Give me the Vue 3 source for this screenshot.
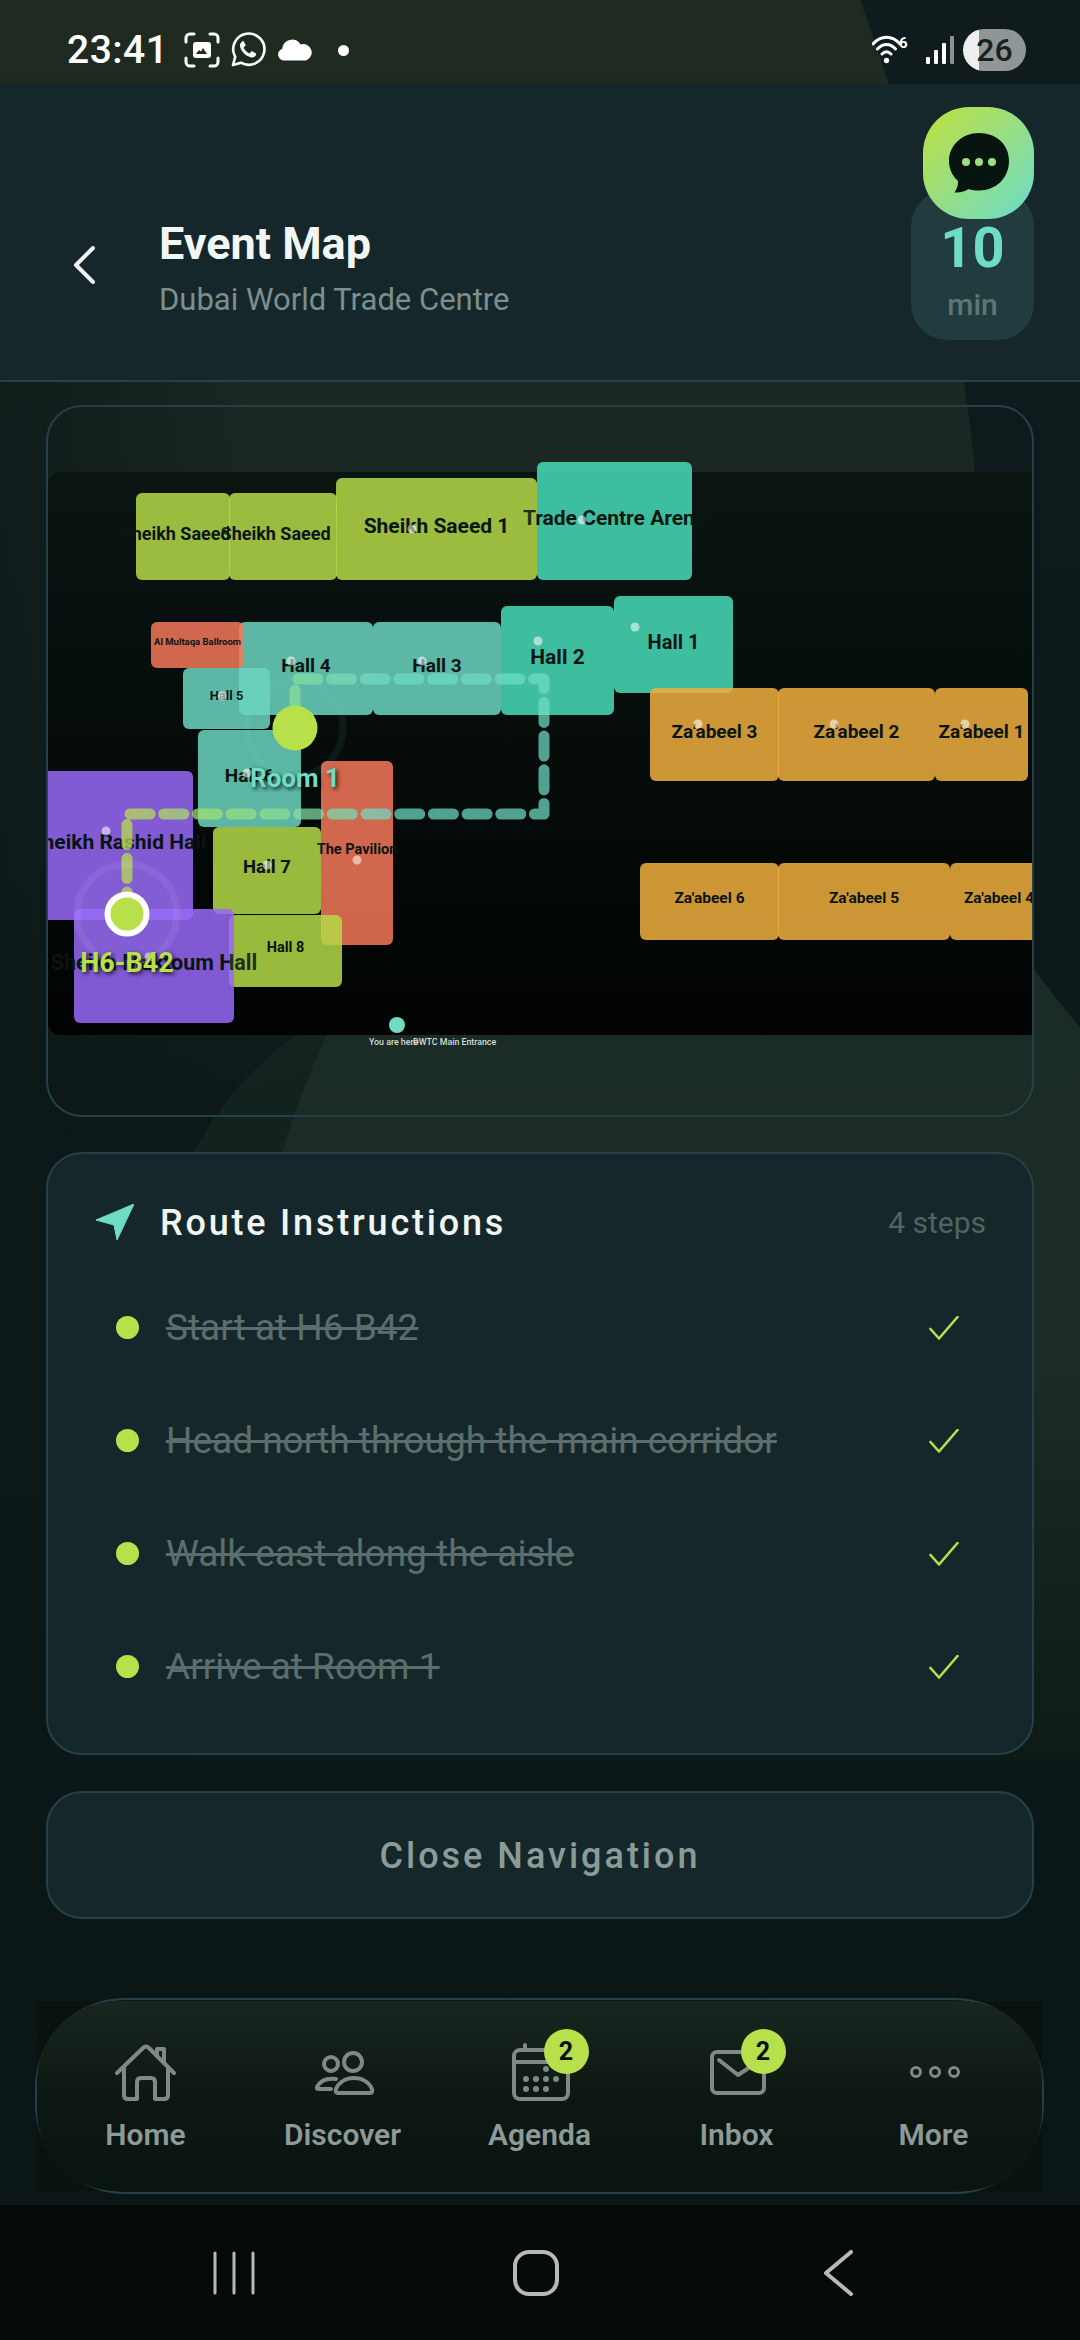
<template>
  <div class="page">
    <svg class="backdrop" viewBox="0 0 1080 2340" aria-hidden="true">
      <defs>
        <linearGradient id="blobTop" gradientUnits="userSpaceOnUse" x1="0" y1="0" x2="0" y2="1100">
          <stop offset="0" stop-color="#1f2b20" />
          <stop offset="0.45" stop-color="#1a2622" />
          <stop offset="1" stop-color="#0e1a1a" />
        </linearGradient>
        <linearGradient id="blobLow" gradientUnits="userSpaceOnUse" x1="0" y1="900" x2="0" y2="1760">
          <stop offset="0" stop-color="#1a2a25" />
          <stop offset="0.5" stop-color="#1d2d25" />
          <stop offset="1" stop-color="#0e1a18" />
        </linearGradient>
        <linearGradient id="edgeFade" gradientUnits="userSpaceOnUse" x1="0" y1="0" x2="260" y2="0">
          <stop offset="0" stop-color="#0c1818" stop-opacity="0.7" />
          <stop offset="1" stop-color="#0c1818" stop-opacity="0" />
        </linearGradient>
      </defs>
      <path d="M0 0H860C900 110 960 300 975 470L960 900L0 1150Z" fill="url(#blobTop)" />
      <rect x="0" y="382" width="260" height="780" fill="url(#edgeFade)" />
      <path d="M190 1160C220 1100 260 1060 297 1035C400 960 700 800 850 800C950 830 1020 960 1080 1027V1760H190Z" fill="url(#blobLow)" opacity="0.5" />
      <path d="M280 1160C295 1110 310 1070 327 1035C420 960 700 800 850 800C950 830 1020 960 1080 1027V1760H280Z" fill="url(#blobLow)" />
    </svg>

    <div class="status-bar">
      <span class="clock">23:41</span>
      <svg class="st-icon" width="36" height="36" viewBox="0 0 36 36">
        <path d="M2 10V6a4 4 0 0 1 4-4h4M26 2h4a4 4 0 0 1 4 4v4M34 26v4a4 4 0 0 1-4 4h-4M10 34H6a4 4 0 0 1-4-4v-4" fill="none" stroke="#fff" stroke-width="3" stroke-linecap="round" />
        <rect x="9" y="10" width="18" height="16" rx="3" fill="#fff" />
        <path d="M12 22l3-4 2 1.5 2-3.5 4 6z" fill="#1f2a20" />
      </svg>
      <svg class="st-icon wa" width="36" height="36" viewBox="0 0 36 36">
        <path d="M3 33l2.2-8.2A15.6 15.6 0 1 1 11 30.7z" fill="none" stroke="#fff" stroke-width="2.6" stroke-linejoin="round" />
        <path d="M12.5 9.5c-2 1-3 3-2.3 5.4 1.4 4.8 5.5 8.8 10.4 10.3 2.4.7 4.4-.3 5.4-2.3.3-.7.2-1.2-.4-1.6l-3-1.8c-.6-.3-1.1-.2-1.5.3l-1 1.2c-.3.4-.7.4-1.1.2-2.3-1.1-4.1-2.9-5.2-5.2-.2-.4-.1-.8.2-1.1l1.1-1c.5-.4.6-.9.3-1.5l-1.7-3c-.4-.6-.9-.7-1.5-.4z" fill="#fff" />
      </svg>
      <svg class="st-icon cloud" width="36" height="24" viewBox="0 0 36 24">
        <path d="M7 22a5.5 5.5 0 0 1-1.3-10.8A9.5 9.5 0 0 1 23.5 7a7.5 7.5 0 0 1 5.5 15z" fill="#fff" stroke="#fff" stroke-linejoin="round" />
      </svg>
      <i class="st-dot"></i>
      <div class="st-right">
        <svg width="40" height="32" viewBox="0 0 40 32">
          <path d="M1 10C9 1 20 1 28 10M5.5 15C11 9 18 9 23.5 15M10 20c3-3 6-3 9 0" fill="none" stroke="#fff" stroke-width="3" stroke-linecap="round" />
          <circle cx="14.5" cy="26.5" r="2.7" fill="#fff" />
          <text x="27" y="14" class="wifi-six">6</text>
        </svg>
        <svg class="signal" width="28" height="28" viewBox="0 0 28 28">
          <rect x="0" y="21" width="4" height="7" rx="1" fill="#fff" />
          <rect x="8" y="14" width="4" height="14" rx="1" fill="#fff" />
          <rect x="16" y="7" width="4" height="21" rx="1" fill="#fff" />
          <rect x="24" y="0" width="4" height="28" rx="1" fill="#8b9391" />
        </svg>
        <div class="battery">26</div>
      </div>
    </div>

    <header class="top-head">
      <svg class="back" width="22" height="38" viewBox="0 0 22 38">
        <path d="M20 2L3 19l17 17" fill="none" stroke="#eef3f1" stroke-width="4" stroke-linecap="round" stroke-linejoin="round" />
      </svg>
      <div class="head-text">
        <h1>Event Map</h1>
        <p>Dubai World Trade Centre</p>
      </div>
      <div class="timer">
        <strong>10</strong>
        <span>min</span>
      </div>
      <div class="chat-fab">
        <svg width="62" height="62" viewBox="0 0 62 62">
          <path d="M31 1C14 1 1 13.5 1 29c0 8 3.5 15 9 20 .3 4-1 8-3.5 11.5 5.5.5 10.5-1 14-3.5 3.2 1 6.7 1.5 10.5 1.5 17 0 30-12.5 30-29.5S48 1 31 1z" fill="#07140f" />
          <circle cx="18" cy="30" r="4" fill="#9ddf7e" />
          <circle cx="31" cy="30" r="4" fill="#9ddf7e" />
          <circle cx="44" cy="30" r="4" fill="#9ddf7e" />
        </svg>
      </div>
    </header>

    <main class="content">
      <section class="map-card">
        <div class="map-stage">
          <div class="map-floor"></div>
          <div
            v-for="room in rooms"
            :key="room.name"
            class="room"
            :class="room.tone"
            :style="roomStyle(room)"
          >{{ room.name }}</div>
          <svg class="map-overlay" viewBox="48 472 984 620">
            <defs>
              <linearGradient id="routeGrad" gradientUnits="userSpaceOnUse" x1="127" y1="0" x2="544" y2="0">
                <stop offset="0" stop-color="#bce24a" />
                <stop offset="0.6" stop-color="#6fdcc4" />
              </linearGradient>
            </defs>
            <circle v-for="dot in dots" :key="dot[0] + '-' + dot[1]" :cx="dot[0]" :cy="dot[1]" r="4.5" fill="#fff" opacity="0.55" />
            <path
              d="M127 912V814H544V679H295V728"
              fill="none"
              stroke="url(#routeGrad)"
              stroke-width="11"
              stroke-linecap="round"
              stroke-linejoin="round"
              stroke-dasharray="20 13.7"
              opacity="0.72"
            />
            <circle cx="295" cy="728" r="48" fill="none" stroke="#6fdcc4" stroke-width="7" opacity="0.07" />
            <circle cx="295" cy="728" r="22.5" fill="#b8e04a" />
            <circle cx="127" cy="914" r="50" fill="#fff" fill-opacity="0.02" stroke="#fff" stroke-opacity="0.07" stroke-width="7" />
            <circle cx="127" cy="914" r="19.5" fill="#b8e04a" stroke="#fff" stroke-width="6" />
            <circle cx="397" cy="1025" r="8" fill="#6fdcc4" />
          </svg>
          <span class="pin-label room-pin">Room 1</span>
          <span class="pin-label start-pin">H6-B42</span>
          <span class="tiny-label here">You are here</span>
          <span class="tiny-label entrance">DWTC Main Entrance</span>
        </div>
      </section>

      <section class="route-card">
        <div class="route-head">
          <svg width="38" height="36" viewBox="0 0 38 36">
            <path d="M38 0L0 16l18 5 3 15z" fill="#6fdcc4" stroke="#6fdcc4" stroke-linejoin="round" />
          </svg>
          <h2>Route Instructions</h2>
          <span class="step-count">{{ steps.length }} steps</span>
        </div>
        <ul class="steps">
          <li v-for="step in steps" :key="step">
            <i class="bullet"></i>
            <span class="step-text">{{ step }}</span>
            <svg class="check" width="30" height="24" viewBox="0 0 30 24">
              <path d="M1.5 13L10 22.5 28.5 1" fill="none" stroke="#b8e04a" stroke-width="2.6" stroke-linecap="round" stroke-linejoin="round" />
            </svg>
          </li>
        </ul>
      </section>

      <button class="close-btn">Close Navigation</button>
    </main>

    <nav class="tab-bar">
      <div class="tab-inner">
        <div class="tab">
          <div class="tab-icon">
            <svg width="80" height="60" viewBox="0 0 80 60">
              <g class="ic">
                <path d="M11 31L37 6Q40 3 43 6L68 31" />
                <path d="M18 25V53Q18 57 22 57H31V40Q31 36 35 36H45Q49 36 49 40V57H58Q62 57 62 53V25" />
                <path d="M51 14V7H58V21" />
              </g>
            </svg>
          </div>
          <span>Home</span>
        </div>
        <div class="tab">
          <div class="tab-icon">
            <svg width="80" height="60" viewBox="0 0 80 60">
              <g class="ic">
                <circle cx="50" cy="20" r="9" />
                <circle cx="28" cy="22" r="7" />
                <path d="M35 51H67Q70 51 69 47C66 40 59 36 51 36C43 36 36 40 33 47Q32 51 35 51Z" />
                <path d="M33 37C24 36 17 39 14 45Q13 47 16 47H28" />
              </g>
            </svg>
          </div>
          <span>Discover</span>
        </div>
        <div class="tab">
          <div class="tab-icon">
            <svg width="80" height="60" viewBox="0 0 80 60">
              <g class="ic">
                <rect x="14" y="8" width="54" height="49" rx="6" />
                <path d="M14 20H68M25 3V8" />
              </g>
              <g fill="#7f8986">
                <circle cx="46" cy="27" r="3" />
                <circle cx="26" cy="37" r="3" />
                <circle cx="36" cy="37" r="3" />
                <circle cx="46" cy="37" r="3" />
                <circle cx="56" cy="37" r="3" />
                <circle cx="26" cy="47" r="3" />
                <circle cx="36" cy="47" r="3" />
                <circle cx="46" cy="47" r="3" />
              </g>
            </svg>
            <b class="badge">2</b>
          </div>
          <span>Agenda</span>
        </div>
        <div class="tab">
          <div class="tab-icon">
            <svg width="80" height="60" viewBox="0 0 80 60">
              <g class="ic">
                <rect x="15" y="10" width="52" height="41" rx="5" />
                <path d="M22 18L41 33L56 23" />
              </g>
            </svg>
            <b class="badge">2</b>
          </div>
          <span>Inbox</span>
        </div>
        <div class="tab">
          <div class="tab-icon">
            <svg width="80" height="60" viewBox="0 0 80 60">
              <g class="ic thin">
                <circle cx="22" cy="30" r="4.5" />
                <circle cx="41" cy="30" r="4.5" />
                <circle cx="60" cy="30" r="4.5" />
              </g>
            </svg>
          </div>
          <span>More</span>
        </div>
      </div>
    </nav>

    <div class="sys-nav">
      <svg width="60" height="46" viewBox="0 0 60 46">
        <path d="M11 3V43M30 3V43M49 3V43" stroke="#b6b9b8" stroke-width="3" stroke-linecap="round" />
      </svg>
      <svg width="60" height="46" viewBox="0 0 60 46">
        <rect x="9" y="2" width="42" height="42" rx="14" fill="none" stroke="#b6b9b8" stroke-width="4" />
      </svg>
      <svg width="60" height="46" viewBox="0 0 60 46">
        <path d="M43 2L18 23l25 21" fill="none" stroke="#b6b9b8" stroke-width="4" stroke-linecap="round" stroke-linejoin="round" />
      </svg>
    </div>
  </div>
</template>

<script setup>
const originX = 48
const originY = 472

// page coordinates: x, y, right, bottom
const makeRoom = (name, tone, x, y, r, b, size) => ({ name, tone, x, y, w: r - x, h: b - y, size })

const rooms = [
  makeRoom('Sheikh Saeed 3', 'lime', 136, 493, 230, 580, 18),
  makeRoom('Sheikh Saeed 2', 'lime', 229, 493, 337, 580, 18),
  makeRoom('Sheikh Saeed 1', 'lime', 336, 478, 537, 580, 21),
  makeRoom('Trade Centre Arena', 'teal', 537, 462, 692, 580, 21),
  makeRoom('Hall 4', 'mint', 239, 622, 373, 715, 19),
  makeRoom('Hall 3', 'mint', 373, 622, 501, 715, 19),
  makeRoom('Hall 2', 'teal', 501, 606, 614, 715, 21),
  makeRoom('Hall 1', 'teal', 614, 596, 733, 693, 20),
  makeRoom('Al Multaqa Ballroom', 'coral', 151, 622, 244, 668, 9.5),
  makeRoom('Hall 5', 'mint', 183, 668, 270, 729, 13),
  makeRoom('Hall 6', 'mint', 198, 730, 301, 827, 19),
  makeRoom('Sheikh Rashid Hall', 'violet', 43, 771, 193, 920, 21),
  makeRoom('Hall 7', 'lime', 213, 827, 321, 914, 18.5),
  makeRoom('The Pavilion', 'coral', 321, 761, 393, 945, 14.5),
  makeRoom('Hall 8', 'lime', 229, 915, 342, 987, 14.5),
  makeRoom('Sheikh Maktoum Hall', 'violet', 74, 909, 234, 1023, 21.5),
  makeRoom("Za'abeel 3", 'amber', 650, 688, 779, 781, 19),
  makeRoom("Za'abeel 2", 'amber', 778, 688, 935, 781, 19),
  makeRoom("Za'abeel 1", 'amber', 935, 688, 1028, 781, 19),
  makeRoom("Za'abeel 6", 'amber', 640, 863, 779, 940, 15.5),
  makeRoom("Za'abeel 5", 'amber', 778, 863, 950, 940, 15.5),
  makeRoom("Za'abeel 4", 'amber', 950, 863, 1048, 940, 15.5)
]

const dots = [
  [412, 529], [582, 520], [291, 661], [422, 661], [222, 696], [538, 641], [635, 627],
  [698, 724], [834, 724], [965, 724], [247, 773], [106, 831], [267, 865], [357, 860], [149, 957]
]

const steps = [
  'Start at H6-B42',
  'Head north through the main corridor',
  'Walk east along the aisle',
  'Arrive at Room 1'
]

const roomStyle = (room) => ({
  left: `${room.x - originX}px`,
  top: `${room.y - originY}px`,
  width: `${room.w}px`,
  height: `${room.h}px`,
  fontSize: `${room.size}px`
})
</script>

<style>
html,
body {
  margin: 0;
  background: #0c1717;
}
</style>

<style scoped>
.page {
  position: relative;
  width: 1080px;
  height: 2340px;
  overflow: hidden;
  display: flex;
  flex-direction: column;
  background: linear-gradient(180deg, #0f1b1c 0%, #0c1817 70%, #0a1615 100%);
  font-family: Roboto, "Liberation Sans", sans-serif;
  color: #eef3f1;
}

.backdrop {
  position: absolute;
  inset: 0;
  width: 1080px;
  height: 2340px;
}

.status-bar,
.top-head,
.content {
  position: relative;
}

.status-bar {
  height: 84px;
  flex: none;
  display: flex;
  align-items: center;
  padding: 16px 54px 0 67px;
  box-sizing: border-box;
}

.clock {
  font-size: 39px;
  font-weight: 500;
  letter-spacing: 0.5px;
  color: #fff;
  margin-right: 16px;
}

.st-icon {
  flex: none;
}

.wa {
  margin-left: 10px;
}

.cloud {
  margin-left: 11px;
}

.st-dot {
  width: 11px;
  height: 11px;
  border-radius: 50%;
  background: #fff;
  margin-left: 25px;
}

.st-right {
  margin-left: auto;
  display: flex;
  align-items: center;
}

.wifi-six {
  font-family: Roboto, sans-serif;
  font-size: 15px;
  font-weight: 700;
  fill: #fff;
}

.signal {
  margin-left: 14px;
}

.battery {
  width: 63px;
  height: 42px;
  margin-left: 9px;
  border-radius: 21px;
  background: linear-gradient(90deg, #eef0ef 0, #eef0ef 16px, #8f9695 16px);
  color: #16211f;
  font-size: 32px;
  font-weight: 500;
  line-height: 42px;
  text-align: center;
}

.top-head {
  height: 298px;
  flex: none;
  box-sizing: border-box;
  padding: 66px 46px 0 73px;
  display: flex;
  align-items: center;
  background: #16272b;
  border-bottom: 2px solid #27414a;
}

.back {
  flex: none;
}

.head-text {
  margin: 6px 0 0 64px;
}

.head-text h1 {
  margin: 0;
  font-size: 45px;
  line-height: 50px;
  font-weight: 700;
  color: #f2f6f4;
}

.head-text p {
  margin: 13px 0 0;
  font-size: 31px;
  line-height: 36px;
  color: #7b8f8d;
}

.timer {
  margin-left: auto;
  width: 123px;
  height: 150px;
  box-sizing: border-box;
  padding-top: 26px;
  border-radius: 36px;
  background: #213b3e;
  display: flex;
  flex-direction: column;
  align-items: center;
}

.timer strong {
  font-size: 56px;
  line-height: 64px;
  font-weight: 700;
  color: #6fdcc4;
}

.timer span {
  margin-top: 7px;
  font-size: 30px;
  line-height: 36px;
  font-weight: 500;
  color: #5d7573;
}

.chat-fab {
  position: absolute;
  left: 923px;
  top: 23px;
  width: 111px;
  height: 112px;
  border-radius: 46px;
  background: linear-gradient(135deg, #b8e04a 10%, #6fdcc4 95%);
  display: flex;
  align-items: center;
  justify-content: center;
}

.content {
  flex: none;
  padding: 23px 46px 0;
}

.map-card {
  height: 712px;
  box-sizing: border-box;
  border: 2px solid #25404a;
  border-radius: 36px;
  padding-top: 65px;
}

.map-stage {
  position: relative;
  height: 563px;
  clip-path: inset(-40px 0 -70px 0);
}

.map-floor {
  position: absolute;
  inset: 0;
  border-radius: 12px 0 0 12px;
  background: linear-gradient(180deg, #0a1512 0%, #000302 100%);
}

.room {
  position: absolute;
  box-sizing: border-box;
  display: flex;
  align-items: center;
  justify-content: center;
  white-space: nowrap;
  border-radius: 6px;
  opacity: 0.85;
  color: #0b1714;
  font-weight: 700;
  line-height: 1;
  padding-bottom: 6px;
}

.lime {
  background: #b5da48;
}

.teal {
  background: #48dcb9;
}

.mint {
  background: #6bd5c0;
}

.coral {
  background: #f57859;
}

.violet {
  background: #9869f8;
}

.amber {
  background: #f0af3e;
}

.map-overlay {
  position: absolute;
  left: 0;
  top: 0;
  width: 984px;
  height: 620px;
  overflow: visible;
}

.pin-label {
  position: absolute;
  transform: translateX(-50%);
  font-size: 26px;
  line-height: 30px;
  font-weight: 700;
  white-space: nowrap;
  text-shadow: 2px 2px 4px rgba(0, 0, 0, 0.8);
}

.room-pin {
  left: 247px;
  top: 291px;
  color: #6fdcc4;
}

.start-pin {
  left: 79px;
  top: 476px;
  font-size: 27px;
  color: #b8e04a;
}

.tiny-label {
  position: absolute;
  top: 564px;
  font-size: 8.8px;
  line-height: 12px;
  font-weight: 500;
  white-space: nowrap;
  color: #d5dcda;
}

.here {
  left: 321px;
}

.entrance {
  left: 365px;
}

.route-card {
  margin-top: 35px;
  height: 603px;
  box-sizing: border-box;
  padding: 46px 46px 0 48px;
  border: 2px solid #25404a;
  border-radius: 36px;
  background: #16272b;
}

.route-head {
  height: 44px;
  display: flex;
  align-items: center;
}

.route-head h2 {
  margin: 2px 0 0 26px;
  font-size: 36px;
  line-height: 44px;
  font-weight: 500;
  letter-spacing: 2.8px;
  color: #f0f5f3;
}

.step-count {
  margin-left: auto;
  font-size: 30px;
  color: #50655f;
}

.steps {
  list-style: none;
  margin: 27px 0 0;
  padding: 0;
}

.steps li {
  height: 113px;
  display: flex;
  align-items: center;
  padding: 0 27px 0 20px;
}

.bullet {
  width: 23px;
  height: 23px;
  border-radius: 50%;
  background: #b8e04a;
  flex: none;
}

.step-text {
  margin-left: 27px;
  font-size: 37px;
  color: #5b6e6c;
  text-decoration: line-through;
}

.check {
  margin-left: auto;
}

.close-btn {
  display: block;
  width: 100%;
  height: 128px;
  margin-top: 36px;
  padding-top: 3px;
  border: 2px solid #25404a;
  border-radius: 36px;
  background: #16272b;
  color: #8a9c96;
  font-family: Roboto, sans-serif;
  font-size: 36px;
  font-weight: 500;
  letter-spacing: 3px;
}

.tab-bar {
  position: absolute;
  left: 37px;
  top: 2001px;
  width: 1005px;
  height: 190px;
  background: #09120f;
}

.tab-bar::before {
  content: "";
  position: absolute;
  inset: -3px -2px;
  border: 2px solid #26404a;
  border-radius: 90px;
}

.tab-inner {
  position: relative;
  height: 100%;
  box-sizing: border-box;
  padding: 41px 10px 0;
  border-radius: 80px;
  background: linear-gradient(180deg, #19261f 0%, #0c1612 55%, #0a1410 100%);
  display: grid;
  grid-template-columns: repeat(5, 197px);
}

.tab {
  display: flex;
  flex-direction: column;
  align-items: center;
}

.tab span {
  margin-top: 16px;
  font-size: 30px;
  line-height: 34px;
  font-weight: 600;
  color: #8d9a97;
}

.tab-icon {
  position: relative;
  width: 80px;
  height: 60px;
}

.ic {
  fill: none;
  stroke: #7f8986;
  stroke-width: 4;
  stroke-linecap: round;
  stroke-linejoin: round;
}

.ic.thin {
  stroke-width: 3;
}

.badge {
  position: absolute;
  left: 44px;
  top: -13px;
  width: 45px;
  height: 45px;
  border-radius: 50%;
  background: #b8e04a;
  color: #08100c;
  font-size: 25px;
  font-weight: 700;
  line-height: 45px;
  text-align: center;
}

.sys-nav {
  position: absolute;
  left: 0;
  top: 2205px;
  width: 1080px;
  height: 135px;
  box-sizing: border-box;
  padding: 45px 0 0 204px;
  display: flex;
  gap: 242px;
  align-items: flex-start;
  background: #040a0a;
}
</style>
